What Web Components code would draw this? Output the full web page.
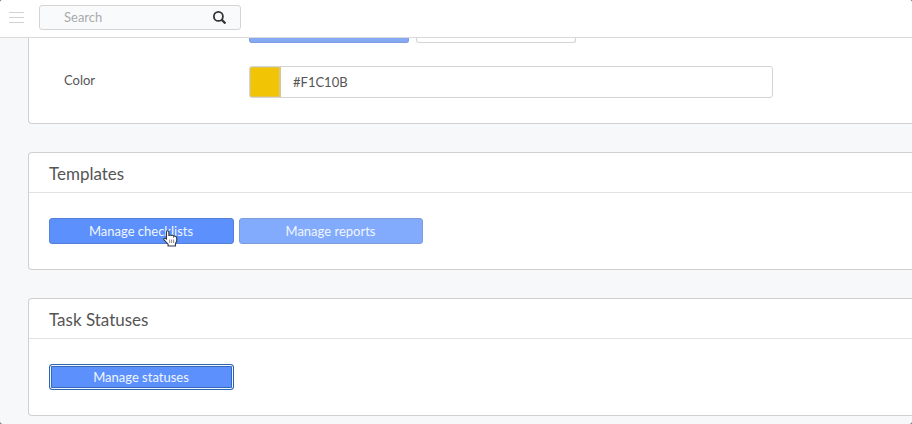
<!DOCTYPE html>
<html lang="en">
<head>
<meta charset="utf-8">
<title>Settings</title>
<style>
  html {
    background: #777;
  }
  body {
    margin: 0;
    overflow: hidden;
    font-family: Lato, "Liberation Sans", sans-serif;
    font-size: 13px;
    color: #555;
  }
</style>
</head>
<body>
<settings-page>
  <top-bar slot="header"></top-bar>
  <settings-card cut>
    <option-tabs></option-tabs>
    <color-field label="Color" value="#F1C10B"></color-field>
  </settings-card>
  <settings-card>
    <span slot="title">Templates</span>
    <action-button hover>Manage checklists</action-button>
    <action-button light>Manage reports</action-button>
  </settings-card>
  <settings-card>
    <span slot="title">Task Statuses</span>
    <action-button focused>Manage statuses</action-button>
  </settings-card>
</settings-page>

<script>
class SettingsPage extends HTMLElement {
  connectedCallback() {
    this.attachShadow({ mode: 'open' });
    this.shadowRoot.innerHTML = `
      <style>
        :host {
          display: flex;
          flex-direction: column;
          height: 424px;
          overflow: hidden;
          background: #f7f8fa;
          border-radius: 3px;
        }
        main {
          display: flex;
          flex-direction: column;
          gap: 28px;
          padding-left: 28px;
        }
      </style>
      <slot name="header"></slot>
      <main><slot></slot></main>
    `;
  }
}

class TopBar extends HTMLElement {
  connectedCallback() {
    this.attachShadow({ mode: 'open' });
    this.shadowRoot.innerHTML = `
      <style>
        :host {
          display: flex;
          flex: none;
          align-items: center;
          box-sizing: border-box;
          height: 38px;
          padding: 0 9px 3px;
          gap: 15px;
          background: #fff;
          border-bottom: 1px solid #d9d9da;
        }
        .menu {
          display: flex;
          flex-direction: column;
          gap: 4px;
          width: 15px;
        }
        .menu i {
          height: 1px;
          background: #d2d2d3;
        }
        .search {
          display: flex;
          align-items: center;
          justify-content: space-between;
          box-sizing: border-box;
          width: 202px;
          height: 25px;
          padding: 0 14px 0 24px;
          background: #f9fafb;
          border: 1px solid #d4d4d5;
          border-radius: 3px;
          color: #a9aaab;
        }
        svg {
          display: block;
        }
      </style>
      <div class="menu"><i></i><i></i><i></i></div>
      <div class="search">
        <span>Search</span>
        <svg width="13" height="13" viewBox="0 0 13 13" fill="none" stroke="#333" stroke-width="1.8">
          <circle cx="5.4" cy="5.4" r="4.5"/>
          <path d="M8.6 8.6 12.5 12.5" stroke-width="2.2"/>
        </svg>
      </div>
    `;
  }
}

class SettingsCard extends HTMLElement {
  connectedCallback() {
    this.attachShadow({ mode: 'open' });
    this.shadowRoot.innerHTML = `
      <style>
        :host {
          display: block;
          box-sizing: border-box;
          height: 118px;
          background: #fff;
          border: 1px solid #d0d0d1;
          border-right: 0;
          border-radius: 4px 0 0 4px;
        }
        :host([cut]) {
          height: 86px;
          border-top: 0;
          border-radius: 0 0 0 4px;
        }
        header {
          display: flex;
          align-items: center;
          box-sizing: border-box;
          height: 40px;
          padding: 2px 20px 0;
          border-bottom: 1px solid #e2e2e3;
          font-size: 17px;
        }
        .body {
          display: flex;
          gap: 5px;
          padding: 25px 20px;
        }
        :host([cut]) header {
          display: none;
        }
        :host([cut]) .body {
          flex-direction: column;
          gap: 23px;
          padding: 0 35px;
        }
      </style>
      <header><slot name="title"></slot></header>
      <div class="body"><slot></slot></div>
    `;
  }
}

// only the lower edge of the two options shows under the top bar
class OptionTabs extends HTMLElement {
  connectedCallback() {
    this.attachShadow({ mode: 'open' });
    this.shadowRoot.innerHTML = `
      <style>
        :host {
          display: flex;
          gap: 7px;
          padding-left: 185px;
        }
        div {
          box-sizing: border-box;
          width: 160px;
          height: 5px;
          border: 1px solid #d4d4d5;
          border-top: 0;
          border-radius: 0 0 3px 3px;
        }
        .on {
          background: #85a9f2;
          border-color: #7b9ce0;
        }
      </style>
      <div class="on"></div>
      <div></div>
    `;
  }
}

class ColorField extends HTMLElement {
  connectedCallback() {
    this.attachShadow({ mode: 'open' });
    this.shadowRoot.innerHTML = `
      <style>
        :host {
          display: flex;
        }
        label {
          width: 185px;
          line-height: 28px;
        }
        .field {
          display: flex;
          box-sizing: border-box;
          width: 524px;
          height: 32px;
          border: 1px solid #d4d4d5;
          border-radius: 3px;
          overflow: hidden;
        }
        .swatch {
          box-sizing: border-box;
          width: 31px;
          background: #f1c505;
          border: 1px solid #e2c457;
          border-right: 2px solid #d5c792;
        }
        .value {
          padding-left: 12px;
          line-height: 31px;
        }
      </style>
      <label>${this.getAttribute('label')}</label>
      <div class="field">
        <div class="swatch"></div>
        <span class="value">${this.getAttribute('value')}</span>
      </div>
    `;
  }
}

class ActionButton extends HTMLElement {
  connectedCallback() {
    this.attachShadow({ mode: 'open' });
    const pointer = `
      <svg width="15" height="17" viewBox="0 0 13 17" preserveAspectRatio="none">
        <path d="M3 9V2Q3 .7 4 .7T5.1 2V6Q5.2 4.9 6.2 4.9T7.3 6Q7.5 5.2 8.4 5.3T9.4 6.5Q9.7 5.9 10.7 6.2T11.9 7.8V11L10.8 13.5V16H4.4V14.2L1 10Q.2 8.8 1 8.3T3 9Z" fill="#fff" stroke="#303846" stroke-width="1"/>
        <path d="M5.8 9.5V13M7.5 9.5V13M9.2 9.5V13" stroke="#777" stroke-width=".8"/>
      </svg>
    `;
    this.shadowRoot.innerHTML = `
      <style>
        :host {
          position: relative;
          display: flex;
          align-items: center;
          justify-content: center;
          box-sizing: border-box;
          width: 185px;
          height: 26px;
          padding-right: 1px;
          background: #5c90fd;
          border: 1px solid #5580d8;
          border-radius: 3px;
          color: #f0f6ff;
        }
        :host([light]) {
          width: 184px;
          background: #83abfd;
          border-color: #7d9cd8;
        }
        :host([focused]) {
          border-color: #2e64ad;
          box-shadow: inset 0 0 0 1px #eef8ff, inset 0 0 0 2px #3768bc;
        }
        svg {
          position: absolute;
          left: 113px;
          top: 11px;
        }
      </style>
      <slot></slot>
      ${this.hasAttribute('hover') ? pointer : ''}
    `;
  }
}

customElements.define('settings-page', SettingsPage);
customElements.define('top-bar', TopBar);
customElements.define('settings-card', SettingsCard);
customElements.define('option-tabs', OptionTabs);
customElements.define('color-field', ColorField);
customElements.define('action-button', ActionButton);
</script>
</body>
</html>
